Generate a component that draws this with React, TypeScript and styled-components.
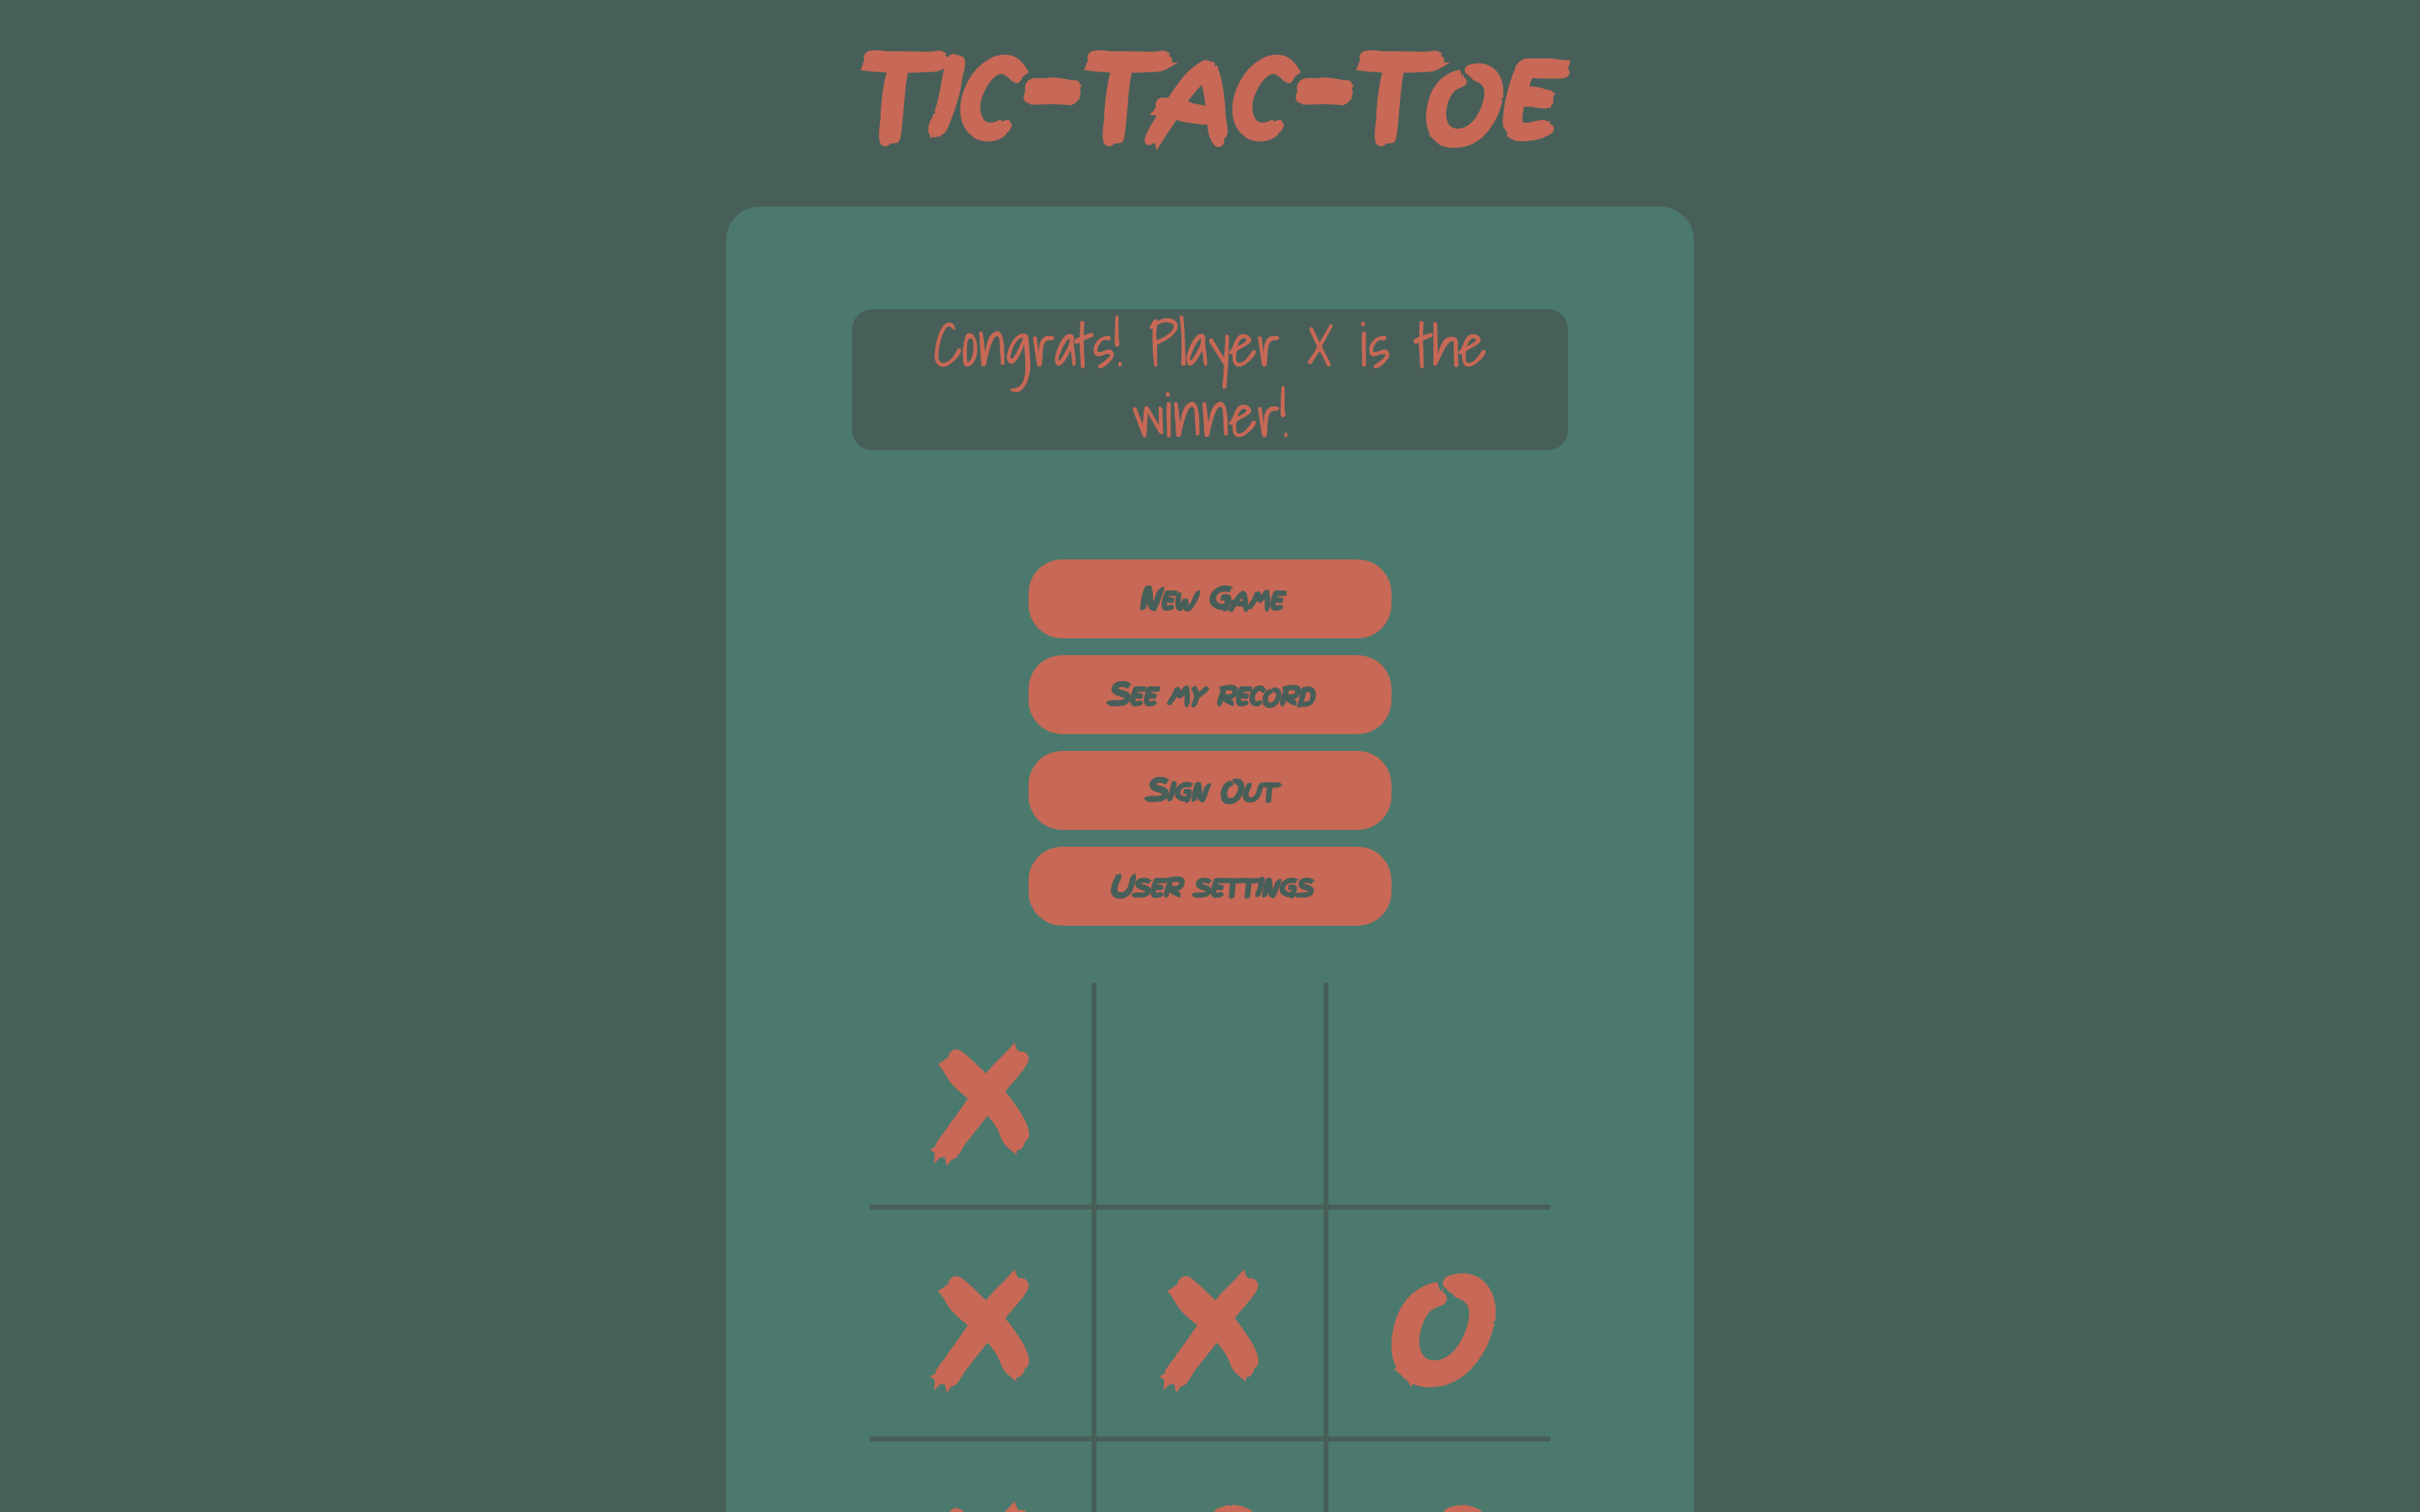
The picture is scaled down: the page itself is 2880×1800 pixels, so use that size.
import React from "react";
import styled, { createGlobalStyle } from "styled-components";

const colors = {
  slate: "#485f59",
  green: "#4c796d",
  coral: "#c76956",
};

const marker = `"Permanent Marker", "Finger Paint", "Open Sans", sans-serif`;
const script = `"Shadows Into Light", "Open Sans", sans-serif`;

const GlobalStyle = createGlobalStyle`
  *, *::before, *::after { box-sizing: border-box; }
  body { margin: 0; background: ${colors.slate}; color: ${colors.coral}; }
`;

const Page = styled.div`
  display: flex;
  flex-direction: column;
  align-items: center;
  padding-bottom: 40px;
`;

const Word = styled.span<{ $cap: number }>`
  display: inline-block;

  &::first-letter {
    font-size: ${(p) => (p.$cap ? `${p.$cap}px` : "inherit")};
    line-height: 1;
  }
`;

const Title = styled.h1`
  display: flex;
  margin: 0;
  padding: 0 24px 46px 0;
  font: italic 800 172px/200px ${marker};
  font-variant-caps: small-caps;
  -webkit-text-stroke: 5px currentColor;
  white-space: nowrap;
`;

const Panel = styled.main`
  display: flex;
  flex-direction: column;
  align-items: center;
  width: 40%;
  min-width: 860px;
  padding: 122px 0;
  border-radius: 40px;
  background: ${colors.green};
`;

const Message = styled.p`
  width: 74%;
  margin: 0;
  padding: 0 80px;
  border-radius: 24px;
  background: ${colors.slate};
  font: 400 70px/84px ${script};
  -webkit-text-stroke: 1px currentColor;
  text-align: center;
`;

const Menu = styled.nav`
  display: flex;
  flex-direction: column;
  gap: 20px;
  width: 432px;
  margin: 130px 0 68px;
`;

const MenuButton = styled.button`
  height: 94px;
  padding: 0 0 4px;
  border: 0;
  border-radius: 40px;
  background: ${colors.coral};
  color: ${colors.slate};
  font: italic 800 40px/84px ${marker};
  font-variant-caps: small-caps;
  -webkit-text-stroke: 2px currentColor;
  cursor: pointer;
`;

const Board = styled.div`
  display: grid;
  grid-template-columns: repeat(3, 270px);
  grid-auto-rows: 270px;
`;

const Cell = styled.button<{ $row: number; $col: number }>`
  display: flex;
  align-items: flex-start;
  justify-content: center;
  padding: 4px 16px 0 0;
  border: 0 solid ${colors.slate};
  border-top-width: ${(p) => (p.$row === 2 ? "6px" : "0")};
  border-bottom-width: ${(p) => (p.$row === 0 ? "6px" : "0")};
  border-left-width: ${(p) => (p.$col === 2 ? "6px" : "0")};
  border-right-width: ${(p) => (p.$col === 0 ? "6px" : "0")};
  background: none;
  color: ${colors.coral};
  font: italic 800 160px/260px ${marker};
  -webkit-text-stroke: 8px currentColor;
  cursor: pointer;
`;

const menuItems = ["New Game", "See my record", "Sign Out", "User settings"];
const marks = ["X", "", "", "X", "X", "O", "X", "O", "O"];

function Lettering({ words, cap }: { words: string[]; cap: number }) {
  return (
    <>
      {words.map((word, i) => (
        <React.Fragment key={i}>
          {i > 0 && !words[i - 1].endsWith("-") ? " " : null}
          <Word $cap={/^[A-Z]/.test(word) ? cap : 0}>{word}</Word>
        </React.Fragment>
      ))}
    </>
  );
}

export default function App() {
  return (
    <>
      <GlobalStyle />
      <Page>
        <Title>
          <Lettering words={["Tic-", "Tac-", "Toe"]} cap={134} />
        </Title>
        <Panel>
          <Message role="status">Congrats! Player X is the winner!</Message>
          <Menu>
            {menuItems.map((label) => (
              <MenuButton key={label} type="button">
                <Lettering words={label.split(" ")} cap={36} />
              </MenuButton>
            ))}
          </Menu>
          <Board>
            {marks.map((mark, i) => (
              <Cell
                key={i}
                type="button"
                $row={Math.floor(i / 3)}
                $col={i % 3}
                aria-label={`Square ${i + 1}${mark ? `, ${mark}` : ""}`}
              >
                {mark}
              </Cell>
            ))}
          </Board>
        </Panel>
      </Page>
    </>
  );
}
